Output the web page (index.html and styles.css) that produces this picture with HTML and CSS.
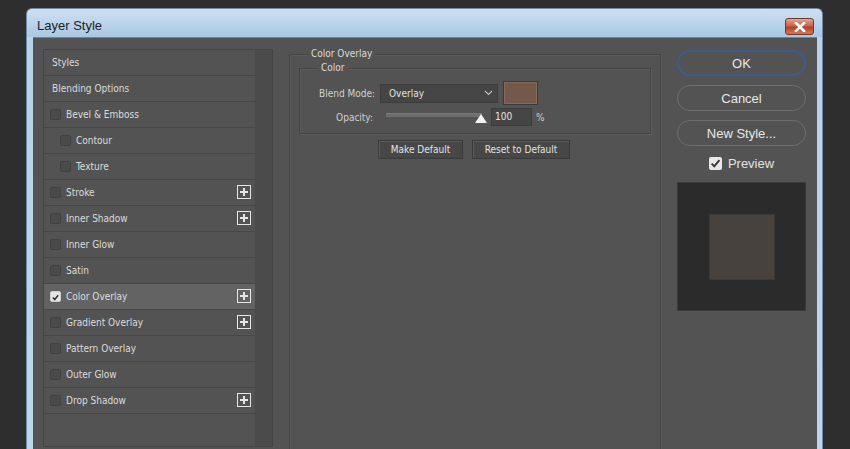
FILE: index.html
```html
<!DOCTYPE html>
<html>
<head>
<meta charset="utf-8">
<link rel="stylesheet" href="styles.css">
</head>
<body>
<div class="window">
  <div class="titlebar">
    <span class="title">Layer Style</span>
    <span class="close"><svg width="14" height="10" viewBox="0 0 14 10"><path d="M3 1 L11 9 M11 1 L3 9" stroke="#fff" stroke-width="2.6" stroke-linecap="square"/></svg></span>
  </div>
  <div class="content">
    <div class="listpanel">
      <ul class="list">
        <li class="row"><span class="lbl">Styles</span></li>
        <li class="row"><span class="lbl">Blending Options</span></li>
        <li class="row"><span class="cb"></span><span class="lbl">Bevel &amp; Emboss</span></li>
        <li class="row sub"><span class="cb"></span><span class="lbl">Contour</span></li>
        <li class="row sub"><span class="cb"></span><span class="lbl">Texture</span></li>
        <li class="row"><span class="cb"></span><span class="lbl">Stroke</span><span class="plus"></span></li>
        <li class="row"><span class="cb"></span><span class="lbl">Inner Shadow</span><span class="plus"></span></li>
        <li class="row"><span class="cb"></span><span class="lbl">Inner Glow</span></li>
        <li class="row"><span class="cb"></span><span class="lbl">Satin</span></li>
        <li class="row selected"><span class="cb checked"><svg width="11" height="11" viewBox="0 0 11 11"><path d="M2.2 5.6 L4.5 8 L8.8 2.8" fill="none" stroke="#2f2f2f" stroke-width="1.8"/></svg></span><span class="lbl">Color Overlay</span><span class="plus"></span></li>
        <li class="row"><span class="cb"></span><span class="lbl">Gradient Overlay</span><span class="plus"></span></li>
        <li class="row"><span class="cb"></span><span class="lbl">Pattern Overlay</span></li>
        <li class="row"><span class="cb"></span><span class="lbl">Outer Glow</span></li>
        <li class="row"><span class="cb"></span><span class="lbl">Drop Shadow</span><span class="plus"></span></li>
      </ul>
      <div class="scrollbar"></div>
    </div>
    <div class="middle">
      <div class="fieldset outer">
        <span class="legend">Color Overlay</span>
        <div class="fieldset inner">
          <span class="legend">Color</span>
          <div class="formrow first">
            <span class="flabel">Blend Mode:</span>
            <div class="select"><span>Overlay</span><svg width="9" height="6" viewBox="0 0 9 6"><path d="M1 1 L4.5 4.5 L8 1" fill="none" stroke="#bdbdbd" stroke-width="1.1"/></svg></div>
            <div class="swatch"></div>
          </div>
          <div class="formrow second">
            <span class="flabel">Opacity:</span>
            <div class="slider"><div class="track"></div><div class="thumb"></div></div>
            <div class="num">100</div>
            <span class="pct">%</span>
          </div>
        </div>
        <div class="btnrow">
          <span class="sbtn mk">Make Default</span>
          <span class="sbtn rs">Reset to Default</span>
        </div>
      </div>
    </div>
    <div class="right">
      <div class="pill ok">OK</div>
      <div class="pill">Cancel</div>
      <div class="pill">New Style...</div>
      <div class="preview-check"><span class="pcb"><svg width="13" height="13" viewBox="0 0 13 13"><path d="M2.6 6.6 L5.3 9.3 L10.4 3.2" fill="none" stroke="#3a3a3a" stroke-width="2"/></svg></span><span>Preview</span></div>
      <div class="previewbox"><div class="psq"></div></div>
    </div>
  </div>
</div>
</body>
</html>
```
FILE: styles.css
```css
html, body {
  margin: 0;
  padding: 0;
  background: #2e2e2e;
  width: 850px;
  height: 449px;
  overflow: hidden;
  font-family: Tahoma, "DejaVu Sans Condensed", "Liberation Sans", sans-serif;
}
.window {
  margin: 8px 0 0 26px;
  width: 797px;
  height: 441px;
  box-sizing: border-box;
  background: linear-gradient(to bottom, #c2d7ec 0, #b8d2ea 40px, #bcd6ee 100%);
  border-radius: 6px 6px 0 0;
  border: 1px solid #6f8aa6;
  border-bottom: none;
  padding: 0 5px 0 6px;
  display: flex;
  flex-direction: column;
  overflow: hidden;
}
.titlebar {
  height: 28px;
  flex-shrink: 0;
  display: flex;
  align-items: center;
  justify-content: space-between;
  background: linear-gradient(to bottom, #cfe0f1, #a9c7e5);
  margin: 0 -5px 0 -6px;
  padding: 0 8px 0 10px;
  border-radius: 5px 5px 0 0;
}
.title {
  font-family: "Liberation Sans", Arial, sans-serif;
  font-size: 13px;
  color: #1b1f24;
  margin-top: 5px;
}
.close {
  width: 29px;
  height: 17px;
  margin-top: 7px;
  box-sizing: border-box;
  border: 1px solid #6d3a30;
  border-radius: 3px;
  background: linear-gradient(to bottom, #e4a592 0, #c9634a 45%, #b4412a 55%, #cf7a5c 100%);
  display: flex;
  align-items: center;
  justify-content: center;
}
.content {
  flex: 1 0 auto;
  background: #535353;
  display: flex;
  padding: 11px 11px 0 10px;
  box-sizing: border-box;
  border-top: 1px solid #6c87a4;
  overflow: hidden;
}
.listpanel {
  width: 230px;
  height: 398px;
  flex-shrink: 0;
  box-sizing: border-box;
  border: 1px solid #444;
  background: #4e4e4e;
  display: flex;
}
.list {
  list-style: none;
  margin: 0;
  padding: 0;
  width: 212px;
  height: 396px;
  background: #535353;
}
.row {
  height: 26px;
  box-sizing: border-box;
  border-bottom: 1px solid #474747;
  display: flex;
  align-items: center;
  padding-left: 6px;
  font-size: 10px;
  color: #dcdcdc;
  position: relative;
}
.row .lbl { margin-left: 2px; }
.row .cb + .lbl { margin-left: 5px; }
.row.sub { padding-left: 16px; }
.row.selected { background: #636363; }
.cb {
  width: 11px;
  height: 11px;
  box-sizing: border-box;
  border: 1px solid #414141;
  border-radius: 2px;
  background: #4a4a4a;
  display: inline-block;
}
.cb.checked {
  background: #e6e6e6;
  border-color: #cfcfcf;
  display: flex;
}
.plus {
  position: absolute;
  right: 4px;
  top: 5px;
  width: 14px;
  height: 14px;
  box-sizing: border-box;
  border: 1px solid #e6e6e6;
  background:
    linear-gradient(#e6e6e6, #e6e6e6) center / 8px 2px no-repeat,
    linear-gradient(#e6e6e6, #e6e6e6) center / 2px 8px no-repeat;
}
.scrollbar {
  width: 16px;
  height: 396px;
  background: #4b4b4b;
  border-left: 1px solid #4a4a4a;
}
.middle {
  width: 372px;
  flex-shrink: 0;
  margin-left: 16px;
  padding-top: 5px;
}
.fieldset {
  border: 1px solid #454545;
  box-shadow: inset 1px 1px 0 #5c5c5c, 1px 1px 0 #5c5c5c;
  position: relative;
  box-sizing: border-box;
}
.fieldset .legend {
  position: absolute;
  top: -8px;
  background: #535353;
  padding: 0 3px;
  font-size: 10px;
  color: #dcdcdc;
  line-height: 14px;
}
.outer {
  height: 400px;
  border-bottom: none;
  padding: 13px 9px 0 9px;
}
.outer > .legend { left: 18px; }
.inner {
  height: 66px;
}
.inner > .legend { left: 18px; }
.formrow {
  display: flex;
  align-items: center;
  font-size: 10px;
  color: #d0d0d0;
}
.formrow.first { margin-top: 12px; height: 24px; }
.formrow.second { margin-top: 1px; height: 22px; }
.flabel {
  text-align: right;
  margin-right: 5px;
}
.first .flabel { width: 75px; }
.second .flabel { width: 73px; margin-right: 13px; }
.select {
  width: 118px;
  height: 19px;
  box-sizing: border-box;
  background: #454545;
  border: 1px solid #3c3c3c;
  display: flex;
  align-items: center;
  justify-content: space-between;
  padding: 0 4px 0 8px;
  color: #e0e0e0;
}
.swatch {
  width: 35px;
  height: 24px;
  box-sizing: border-box;
  margin-left: 5px;
  border: 1px solid #3a3a3a;
  background: #72594a;
  box-shadow: inset 0 0 0 1px #85695a;
}
.slider {
  width: 100px;
  height: 18px;
  position: relative;
}
.track {
  position: absolute;
  left: 0;
  top: 5px;
  width: 96px;
  height: 3px;
  background: #6e6e6e;
  border-top: 1px solid #7b7b7b;
}
.thumb {
  position: absolute;
  left: 89px;
  top: 6px;
  width: 0;
  height: 0;
  border-left: 6px solid transparent;
  border-right: 6px solid transparent;
  border-bottom: 9px solid #f2f2f2;
}
.num {
  width: 41px;
  height: 18px;
  box-sizing: border-box;
  margin-left: 5px;
  background: #454545;
  border: 1px solid #3c3c3c;
  padding-left: 3px;
  line-height: 16px;
  color: #e6e6e6;
}
.pct { margin-left: 4px; }
.btnrow {
  display: flex;
  margin-top: 6px;
  margin-left: 79px;
  gap: 9px;
}
.sbtn {
  height: 19px;
  box-sizing: border-box;
  background: #474747;
  border: 1px solid #3a3a3a;
  box-shadow: inset 1px 1px 0 #5a5a5a;
  font-size: 10px;
  color: #e4e4e4;
  display: flex;
  align-items: center;
  justify-content: center;
}
.sbtn.mk { width: 85px; }
.sbtn.rs { width: 98px; }
.right {
  width: 129px;
  flex-shrink: 0;
  margin-left: 16px;
  display: flex;
  flex-direction: column;
  align-items: center;
}
.pill {
  width: 129px;
  height: 26px;
  flex-shrink: 0;
  box-sizing: border-box;
  border: 1px solid #6e6e6e;
  border-radius: 13px;
  color: #e8e8e8;
  font-family: "Liberation Sans", Arial, sans-serif;
  font-size: 13px;
  display: flex;
  align-items: center;
  justify-content: center;
  margin-bottom: 9px;
}
.pill.ok {
  border: 2px solid #3c5c8c;
  margin-top: 1px;
}
.preview-check {
  display: flex;
  align-items: center;
  font-family: "Liberation Sans", Arial, sans-serif;
  font-size: 13px;
  color: #e2e2e2;
  margin-top: 1px;
  height: 14px;
}
.pcb {
  width: 13px;
  height: 13px;
  background: #e8e8e8;
  border-radius: 2px;
  margin-right: 6px;
  display: flex;
}
.previewbox {
  width: 129px;
  height: 129px;
  flex-shrink: 0;
  box-sizing: border-box;
  margin-top: 12px;
  background: #2b2b2b;
  border: 1px solid #3a3a3a;
  display: flex;
  align-items: center;
  justify-content: center;
}
.psq {
  width: 64px;
  height: 64px;
  background: #48423f;
  box-shadow: 0 0 0 1px #3d3936;
}
```
